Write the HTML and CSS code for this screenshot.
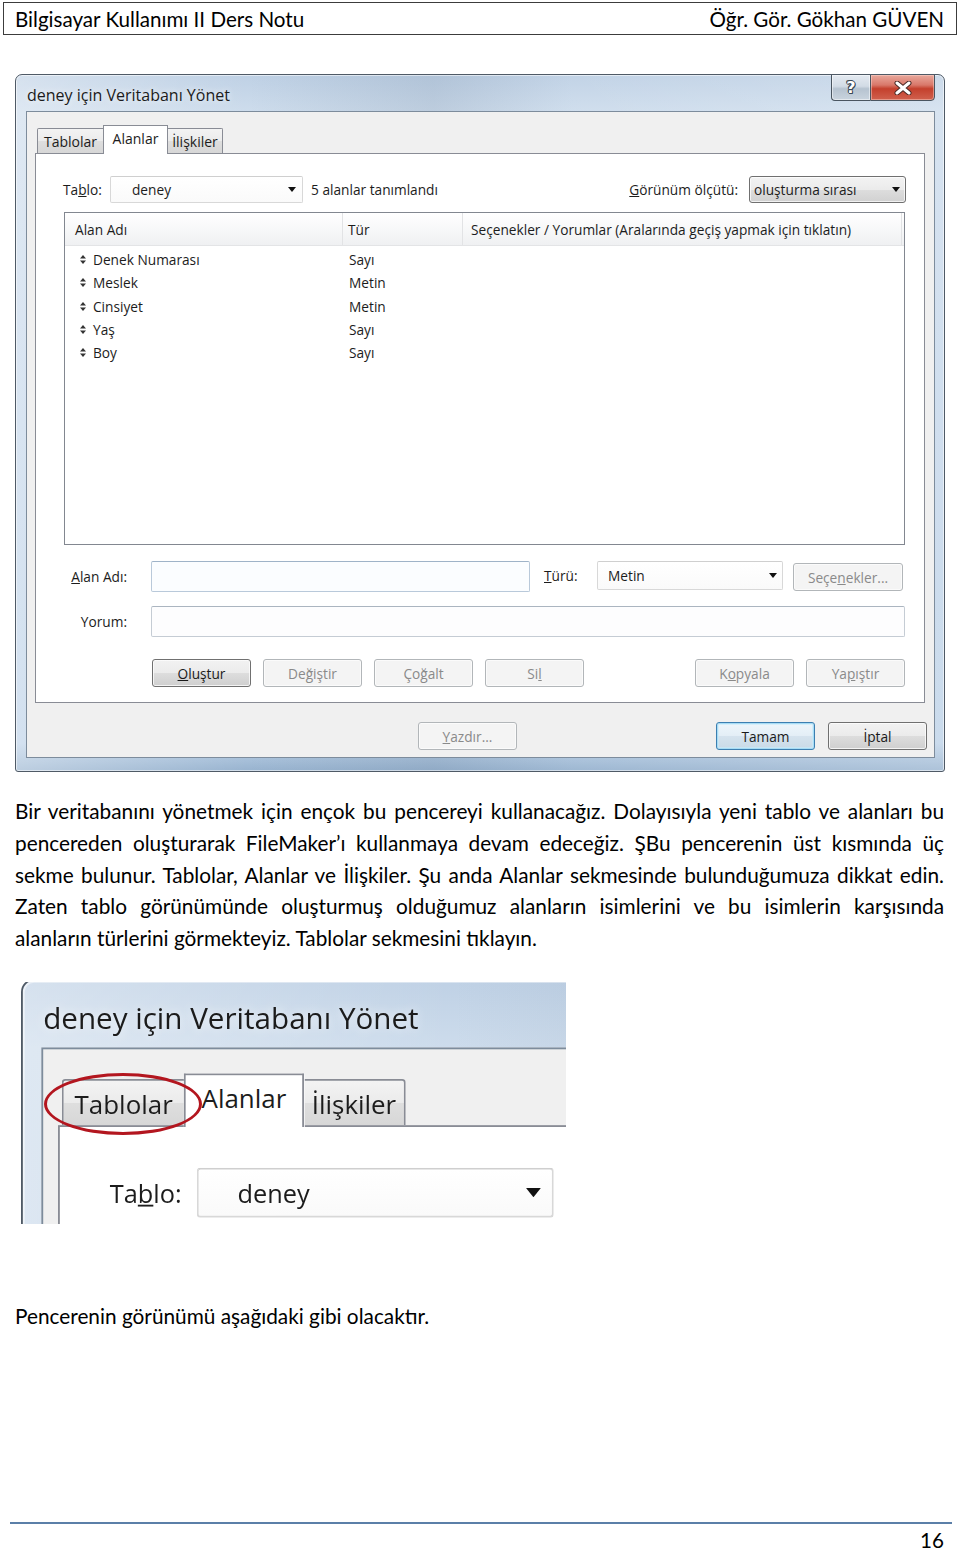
FILE: index.html
```html
<!DOCTYPE html>
<html lang="tr">
<head>
<meta charset="utf-8">
<title>Bilgisayar Kullanımı II Ders Notu</title>
<link rel="stylesheet" href="styles.css">
</head>
<body>
<header class="page-header">
  <span>Bilgisayar Kullanımı II Ders Notu</span>
  <span>Öğr. Gör. Gökhan GÜVEN</span>
</header>

<main class="content">
  <div class="shot">
    <div class="win">
      <div class="titlebar">
        <span class="title">deney için Veritabanı Yönet</span>
        <div class="caption-btns">
          <span class="cbtn help"><span class="qmark">?</span></span>
          <span class="cbtn close">
            <svg width="18" height="14" viewBox="0 0 18 14"><path d="M3 2 L15 12 M15 2 L3 12" stroke="#4a2a26" stroke-width="5" stroke-linecap="round"/><path d="M3 2 L15 12 M15 2 L3 12" stroke="#fff" stroke-width="3" stroke-linecap="round"/></svg>
          </span>
        </div>
      </div>
      <div class="client">
        <div class="tabs">
          <span class="tab t1">Tablolar</span>
          <span class="tab t2 active">Alanlar</span>
          <span class="tab t3">İlişkiler</span>
        </div>
        <div class="panel">
          <div class="toprow">
            <span class="lbl tablo-lbl">Ta<u>b</u>lo:</span>
            <span class="combo flat tablo-combo"><span>deney</span><svg class="arrow" width="8" height="5" viewBox="0 0 8 5"><polygon points="0,0 8,0 4,5" fill="#111"/></svg></span>
            <span class="count">5 alanlar tanımlandı</span>
            <span class="spacer"></span>
            <span class="lbl"><u>G</u>örünüm ölçütü:</span>
            <span class="combo raised view-combo"><span>oluşturma sırası</span><svg class="arrow" width="8" height="5" viewBox="0 0 8 5"><polygon points="0,0 8,0 4,5" fill="#111"/></svg></span>
          </div>

          <div class="list">
            <div class="list-head">
              <span class="col c1">Alan Adı</span>
              <span class="col c2">Tür</span>
              <span class="col c3">Seçenekler / Yorumlar (Aralarında geçiş yapmak için tıklatın)</span>
            </div>
            <div class="list-body">
              <div class="row"><span class="col c1"><svg class="grip" width="6" height="9" viewBox="0 0 6 9"><polygon points="0,3.6 3,0 6,3.6" fill="#333"/><polygon points="0,5.4 6,5.4 3,9" fill="#333"/></svg>Denek Numarası</span><span class="col c2">Sayı</span></div>
              <div class="row"><span class="col c1"><svg class="grip" width="6" height="9" viewBox="0 0 6 9"><polygon points="0,3.6 3,0 6,3.6" fill="#333"/><polygon points="0,5.4 6,5.4 3,9" fill="#333"/></svg>Meslek</span><span class="col c2">Metin</span></div>
              <div class="row"><span class="col c1"><svg class="grip" width="6" height="9" viewBox="0 0 6 9"><polygon points="0,3.6 3,0 6,3.6" fill="#333"/><polygon points="0,5.4 6,5.4 3,9" fill="#333"/></svg>Cinsiyet</span><span class="col c2">Metin</span></div>
              <div class="row"><span class="col c1"><svg class="grip" width="6" height="9" viewBox="0 0 6 9"><polygon points="0,3.6 3,0 6,3.6" fill="#333"/><polygon points="0,5.4 6,5.4 3,9" fill="#333"/></svg>Yaş</span><span class="col c2">Sayı</span></div>
              <div class="row"><span class="col c1"><svg class="grip" width="6" height="9" viewBox="0 0 6 9"><polygon points="0,3.6 3,0 6,3.6" fill="#333"/><polygon points="0,5.4 6,5.4 3,9" fill="#333"/></svg>Boy</span><span class="col c2">Sayı</span></div>
            </div>
          </div>

          <div class="frow r1">
            <span class="flbl"><u>A</u>lan Adı:</span>
            <span class="input name-input"></span>
            <span class="lbl turu-lbl"><u>T</u>ürü:</span>
            <span class="combo flat turu-combo"><span>Metin</span><svg class="arrow" width="8" height="5" viewBox="0 0 8 5"><polygon points="0,0 8,0 4,5" fill="#111"/></svg></span>
            <span class="btn disabled opt-btn">Seçe<u>n</u>ekler...</span>
          </div>
          <div class="frow r2">
            <span class="flbl">Yorum:</span>
            <span class="input comment-input"></span>
          </div>
          <div class="actions">
            <span class="btn"><u>O</u>luştur</span>
            <span class="btn disabled">De<u>ğ</u>iştir</span>
            <span class="btn disabled">Ço<u>ğ</u>alt</span>
            <span class="btn disabled">Si<u>l</u></span>
            <span class="btn disabled push">K<u>o</u>pyala</span>
            <span class="btn disabled">Ya<u>p</u>ıştır</span>
          </div>
        </div>
        <div class="dlg-footer">
          <span class="btn disabled"><u>Y</u>azdır...</span>
          <span class="btn default push">Tamam</span>
          <span class="btn">İptal</span>
        </div>
      </div>
    </div>
  </div>

  <div class="para">
    <span class="jline">Bir veritabanını yönetmek için ençok bu pencereyi kullanacağız. Dolayısıyla yeni tablo ve alanları bu</span>
    <span class="jline">pencereden oluşturarak FileMaker’ı kullanmaya devam edeceğiz. ŞBu pencerenin üst kısmında üç</span>
    <span class="jline">sekme bulunur. Tablolar, Alanlar ve İlişkiler. Şu anda Alanlar sekmesinde bulunduğumuza dikkat edin.</span>
    <span class="jline">Zaten tablo görünümünde oluşturmuş olduğumuz alanların isimlerini ve bu isimlerin karşısında</span>
    <span class="line">alanların türlerini görmekteyiz. Tablolar sekmesini tıklayın.</span>
  </div>

  <div class="zoomshot">
    <div class="win win-zoom">
      <div class="titlebar">
        <span class="title">deney için Veritabanı Yönet</span>
      </div>
      <div class="client">
        <div class="tabs">
          <span class="tab t1">Tablolar</span>
          <span class="tab t2 active">Alanlar</span>
          <span class="tab t3">İlişkiler</span>
        </div>
        <div class="panel">
          <div class="toprow">
            <span class="lbl tablo-lbl">Ta<u>b</u>lo:</span>
            <span class="combo flat tablo-combo"><span>deney</span><svg class="arrow" width="8" height="5" viewBox="0 0 8 5"><polygon points="0,0 8,0 4,5" fill="#111"/></svg></span>
            <span class="count">5</span>
          </div>
        </div>
      </div>
    </div>
    <span class="mark"></span>
  </div>

  <p class="note">Pencerenin görünümü aşağıdaki gibi olacaktır.</p>

  <footer class="page-footer">
    <span class="rule"></span>
    <span class="pageno">16</span>
  </footer>
</main>
</body>
</html>
```

FILE: styles.css
```css
* { box-sizing: border-box; }
html, body { margin: 0; padding: 0; background: #fff; }
body {
  width: 960px;
  height: 1550px;
  overflow: hidden;
  font-family: Lato, "Open Sans", sans-serif;
  color: #000;
}

/* ---------- page header ---------- */
.page-header {
  margin: 2px 3px 0;
  height: 33px;
  border: 1px solid #3c3c3c;
  display: flex;
  justify-content: space-between;
  align-items: center;
  padding: 0 12px 0 11px;
  font-size: 20.6px;
}

.content { padding: 0 16px 0 15px; }

/* ---------- dialog ---------- */
.shot { margin-top: 39px; }

.win {
  width: 930px;
  height: 698px;
  border: 1px solid #4f5a66;
  border-radius: 7px 7px 3px 3px;
  padding: 0 9px 13px 10px;
  display: flex;
  flex-direction: column;
  background:
    linear-gradient(90deg, rgba(255,255,255,.35) 0, rgba(255,255,255,0) 25%, rgba(90,110,135,.14) 45%, rgba(255,255,255,.05) 60%, rgba(255,255,255,.2) 100%),
    linear-gradient(180deg, #bfd1e5 0, #cddcec 36px, #c4d6ea 50%, #bdd2e8 96%, #98b3cf 100%);
  box-shadow: inset 0 0 0 1px rgba(255,255,255,.55);
  font-family: "Open Sans", "Noto Sans", sans-serif;
  font-size: 13.7px;
  color: #1c1c1c;
  overflow: hidden;
}

.titlebar {
  height: 36px;
  flex: none;
  display: flex;
  justify-content: space-between;
  align-items: flex-start;
  padding-left: 1px;
}
.title {
  margin-top: 9px;
  font-size: 16px;
  color: #1b1b1b;
  text-shadow: 0 0 6px rgba(255,255,255,.9);
}
.caption-btns { display: flex; margin-top: -1px; }
.cbtn {
  height: 27px;
  border: 1px solid #4a5560;
  display: flex;
  align-items: center;
  justify-content: center;
}
.cbtn.help {
  width: 39px;
  border-radius: 0 0 0 4px;
  border-right: none;
  background: linear-gradient(180deg, #e4eaf1 0, #d2dbe5 45%, #b6c3d0 55%, #c9d4de 100%);
  box-shadow: inset 0 0 0 1px rgba(255,255,255,.5);
}
.qmark {
  font: bold 16px "DejaVu Sans", sans-serif;
  color: #fff;
  text-shadow: 1px 0 0 #3b4754, -1px 0 0 #3b4754, 0 1px 0 #3b4754, 0 -1px 0 #3b4754, 1px 1px 0 #3b4754, -1px -1px 0 #3b4754;
  margin-top: -1px;
}
.cbtn.close {
  width: 65px;
  border-radius: 0 0 4px 0;
  background: linear-gradient(180deg, #e9a99d 0, #d9786a 40%, #c4402d 55%, #d0614e 100%);
  box-shadow: inset 0 0 0 1px rgba(255,220,210,.45);
}

.client {
  height: 647px;
  flex: none;
  border: 1px solid #7d8c9c;
  background: #f0f0f0;
  padding: 13px 9px 0 8px;
  display: flex;
  flex-direction: column;
}

.tabs {
  height: 28px;
  flex: none;
  display: flex;
  align-items: flex-end;
  padding-left: 2px;
}
.tab {
  height: 25px;
  border: 1px solid #898c95;
  border-bottom: none;
  background: linear-gradient(180deg, #f3f3f3 0, #ebebeb 50%, #dedede 51%, #d7d7d7 100%);
  display: flex;
  align-items: center;
  justify-content: center;
  font-size: 14px;
}
.tab.t1 { width: 67px; border-radius: 2px 0 0 0; }
.tab.t2 { width: 63px; }
.tab.t3 { width: 56px; border-radius: 0 2px 0 0; }
.tab.active {
  height: 29px;
  margin: 0 -1px -1px;
  background: #fff;
  position: relative;
  z-index: 1;
  padding-bottom: 4px;
  border-color: #898c95;
}
.tab.t2.active { width: 65px; }

.panel {
  height: 550px;
  flex: none;
  border: 1px solid #898c95;
  background: #fff;
  padding: 22px 18px 0 27px;
  display: flex;
  flex-direction: column;
}

.toprow {
  height: 27px;
  display: flex;
  align-items: center;
  flex: none;
}
.lbl { white-space: nowrap; }
.tablo-lbl { width: 47px; }
.count { margin-left: 8px; white-space: nowrap; }
.spacer { flex: 1; }

.combo {
  height: 27px;
  display: flex;
  align-items: center;
  justify-content: space-between;
  border-radius: 2px;
}
.combo.flat {
  border: 1px solid #d8d8d8;
  border-top-color: #cfcfcf;
  background: linear-gradient(180deg, #ffffff 0, #fafafa 100%);
}
.combo.raised {
  border: 1px solid #707070;
  border-radius: 3px;
  background: linear-gradient(180deg, #f3f3f3 0, #ebebeb 50%, #dddddd 51%, #d1d1d1 100%);
  box-shadow: inset 0 0 0 1px rgba(255,255,255,.7);
}
.tablo-combo { width: 193px; flex: none; padding: 0 6px 0 21px; }
.view-combo { width: 157px; margin-left: 11px; padding: 0 5px 0 4px; }
.arrow { flex: none; }

.list {
  margin: 9px 1px 0 1px;
  height: 333px;
  flex: none;
  border: 1px solid #828790;
  background: #fff;
}
.list-head {
  height: 33px;
  display: flex;
  background: linear-gradient(180deg, #ffffff 0, #f7f8f9 50%, #eff0f2 100%);
  border-bottom: 1px solid #e3e4e6;
}
.list-head .col {
  display: flex;
  align-items: center;
  border-right: 1px solid #e2e3e5;
}
.col.c1 { width: 278px; padding-left: 10px; }
.col.c2 { width: 120px; padding-left: 5px; }
.col.c3 { flex: 1; padding-left: 8px; border-right: none; margin-right: 2px; }
.list-head .col.c3 { border-right: 1px solid #e2e3e5; }
.list-body { padding-top: 2px; }
.row {
  height: 23.3px;
  display: flex;
  align-items: center;
}
.row .col.c1 { padding-left: 15px; display: flex; align-items: center; }
.row .col.c2 { padding-left: 6px; }
.grip { margin-right: 7px; flex: none; }

.frow {
  display: flex;
  align-items: flex-start;
  flex: none;
}
.frow.r1 { margin-top: 16px; height: 31px; }
.frow.r2 { margin-top: 14px; height: 31px; }
.flbl {
  width: 115px;
  margin-left: -27px;
  padding-right: 24px;
  text-align: right;
  line-height: 31px;
  white-space: nowrap;
}
.input {
  height: 31px;
  border: 1px solid #c5ccd4;
  border-top-color: #abb5c0;
  border-radius: 2px;
  background: #fdfdfe;
}
.name-input { width: 379px; border-color: #b9c9da; border-top-color: #9fb3c8; background: #fbfdff; }
.comment-input { width: 754px; }
.turu-lbl { width: 53px; margin-left: 14px; line-height: 30px; }
.turu-combo { width: 186px; height: 29px; padding: 0 5px 0 10px; }

.btn {
  width: 99px;
  height: 28px;
  flex: none;
  display: flex;
  align-items: center;
  justify-content: center;
  border: 1px solid #707070;
  border-radius: 3px;
  background: linear-gradient(180deg, #f2f2f2 0, #ebebeb 50%, #dddddd 51%, #cfcfcf 100%);
  box-shadow: inset 0 0 0 1px rgba(252,252,252,.8);
  color: #1a1a1a;
  white-space: nowrap;
}
.btn.disabled {
  border-color: #b2b6b9;
  background: #f4f4f4;
  box-shadow: inset 0 0 0 1px #fbfbfb;
  color: #8a8a8a;
}
.btn.default {
  border-color: #3c7fb1;
  box-shadow: inset 0 0 0 1px #a7dcf5, inset 0 0 0 2px rgba(200,235,250,.6);
  background: linear-gradient(180deg, #eef6fb 0, #e3eef6 50%, #d5e3ee 51%, #c9dae7 100%);
}
.btn.opt-btn { width: 110px; margin-left: 10px; margin-top: 2px; }
.push { margin-left: auto; }

.actions {
  margin-top: 22px;
  margin-right: 1px;
  height: 28px;
  display: flex;
  gap: 12px;
  padding-left: 89px;
  flex: none;
}

.dlg-footer {
  flex: none;
  display: flex;
  gap: 13px;
  padding: 19px 7px 0 391px;
  margin-right: -9px;
  margin-left: -8px;
}

/* ---------- paragraph ---------- */
.para {
  margin-top: 23px;
  font-size: 20.8px;
  line-height: 31.75px;
}
.jline {
  display: block;
  text-align: justify;
  text-align-last: justify;
  white-space: nowrap;
}
.line { display: block; }

/* ---------- zoomed detail ---------- */
.zoomshot {
  margin: 28px 0 0 6px;
  width: 545px;
  height: 242px;
  overflow: hidden;
  position: relative;
}
.win-zoom {
  transform: scale(1.85);
  transform-origin: 0 0;
  margin-top: -3px;
}
.mark {
  position: absolute;
  left: 23px;
  top: 91px;
  width: 158px;
  height: 62px;
  border: 3px solid #b3161f;
  border-radius: 50%;
}

.note {
  margin: 76px 0 0;
  font-size: 20.8px;
  line-height: 32px;
}

.page-footer {
  margin: 190px -8px 0 -5px;
  display: flex;
  flex-direction: column;
  align-items: flex-end;
}
.rule {
  display: block;
  width: 100%;
  height: 2px;
  background: #5b7fa8;
}
.pageno {
  margin: 6px 8px 0 0;
  font-size: 20.6px;
  line-height: 20px;
}
```
